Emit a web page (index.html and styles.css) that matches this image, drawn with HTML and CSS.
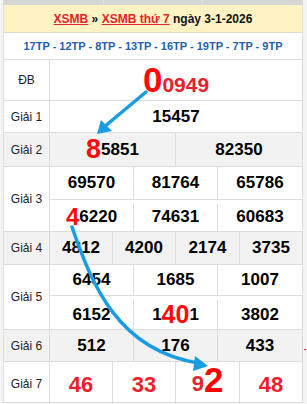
FILE: index.html
```html
<!DOCTYPE html>
<html lang="vi">
<head>
<meta charset="utf-8">
<link rel="stylesheet" href="styles.css">
</head>
<body>
<div class="page">
  <div class="topstrip"><div></div><div></div><div></div></div>
  <div class="board">
    <div class="title"><a href="#">XSMB</a> » <a href="#">XSMB thứ 7</a> ngày 3-1-2026</div>
    <div class="codes">17TP - 12TP - 8TP - 13TP - 16TP - 19TP - 7TP - 9TP</div>

    <div class="row r-db">
      <div class="label">ĐB</div>
      <div class="cells c1"><div class="cell db"><span class="big">0</span>0949</div></div>
    </div>
    <div class="row r-1">
      <div class="label">Giải 1</div>
      <div class="cells c1"><div class="cell">15457</div></div>
    </div>
    <div class="row r-2 alt">
      <div class="label">Giải 2</div>
      <div class="cells c2"><div class="cell"><span class="red r8">8</span>5851</div><div class="cell">82350</div></div>
    </div>
    <div class="row r-3">
      <div class="label">Giải 3</div>
      <div class="cells c3">
        <div class="cell top">69570</div><div class="cell top">81764</div><div class="cell top">65786</div>
        <div class="cell"><span class="red r4">4</span>6220</div><div class="cell">74631</div><div class="cell">60683</div>
      </div>
    </div>
    <div class="row r-4 alt">
      <div class="label">Giải 4</div>
      <div class="cells c4"><div class="cell">4812</div><div class="cell">4200</div><div class="cell">2174</div><div class="cell">3735</div></div>
    </div>
    <div class="row r-5">
      <div class="label">Giải 5</div>
      <div class="cells c3">
        <div class="cell top">6454</div><div class="cell top">1685</div><div class="cell top">1007</div>
        <div class="cell">6152</div><div class="cell">1<span class="red r40">40</span>1</div><div class="cell">3802</div>
      </div>
    </div>
    <div class="row r-6 alt">
      <div class="label">Giải 6</div>
      <div class="cells c3"><div class="cell">512</div><div class="cell">176</div><div class="cell">433</div></div>
    </div>
    <div class="row r-7">
      <div class="label">Giải 7</div>
      <div class="cells c4 g7"><div class="cell">46</div><div class="cell">33</div><div class="cell">9<span class="big">2</span></div><div class="cell">48</div></div>
    </div>
  </div>

  <svg class="arrows" width="307" height="404" viewBox="0 0 307 404">
    <g stroke="#199ce2" stroke-width="3.5" fill="none" stroke-linecap="round">
      <path d="M146 92 L104 127"/>
      <path d="M72 227 C 92 285, 118 350, 198 363"/>
    </g>
    <g fill="#199ce2">
      <polygon points="97,134 101,120 112,131"/>
      <polygon points="208,366 195,356 193,371"/>
    </g>
  </svg>
  <span class="dot"></span>
</div>
</body>
</html>
```

FILE: styles.css
```css
* { box-sizing: border-box; }
html, body { margin: 0; padding: 0; }
body {
  background: #f4f4f4;
  font-family: "Liberation Sans", Arial, sans-serif;
  width: 307px;
  height: 404px;
  overflow: hidden;
}
.page { position: relative; width: 307px; height: 404px; }

.topstrip {
  display: grid;
  grid-template-columns: 101px 99px 1fr;
  height: 5px;
  margin: 0 4px 0 3px;
  background: #d6d6d6;
}
.topstrip div { border-right: 1px solid #e4e4e4; }
.topstrip div:last-child { border-right: none; }

.board {
  margin: 0 4px 0 3px;
  border-left: 1px solid #dcdcdc;
  border-right: 1px solid #dcdcdc;
  background: #fff;
}

.title {
  height: 28px;
  display: flex;
  align-items: center;
  justify-content: center;
  background: #fff3c4;
  border-bottom: 1px solid #e2dcc4;
  font-size: 12px;
  font-weight: bold;
  color: #111;
  gap: 0;
  white-space: pre;
}
.title a { color: #e3242b; text-decoration: underline; }

.codes {
  height: 27px;
  display: flex;
  align-items: center;
  justify-content: center;
  border-bottom: 1px solid #dcdcdc;
  font-size: 11px;
  font-weight: bold;
  color: #2360b0;
  white-space: pre;
}

.row {
  display: grid;
  grid-template-columns: 46px 1fr;
  border-bottom: 1px solid #dcdcdc;
  background: #fff;
}
.row.alt { background: #f2f2f2; }
.label {
  border-right: 1px solid #dcdcdc;
  display: flex;
  align-items: center;
  justify-content: center;
  font-size: 12px;
  color: #222;
}
.cells { display: grid; }
.c1 { grid-template-columns: 1fr; }
.c2 { grid-template-columns: 1fr 1fr; }
.c3 { grid-template-columns: 84px 84px 1fr; }
.c4 { grid-template-columns: 63px 63px 64px 1fr; }
.cell {
  display: flex;
  align-items: center;
  justify-content: center;
  font-size: 17px;
  font-weight: bold;
  color: #000;
  border-right: 1px solid #dcdcdc;
  white-space: pre;
}
.cells .cell:nth-child(3n) { }
.c1 .cell:last-child,
.c2 .cell:nth-child(2n),
.c3 .cell:nth-child(3n),
.c4 .cell:nth-child(4n) { border-right: none; }
.cell.top { border-bottom: 1px solid #dcdcdc; }

.r-db { height: 41px; }
.r-1 { height: 32px; }
.r-2 { height: 34px; }
.r-3 { height: 65px; }
.r-3 .cell.top { height: 33px; }
.r-4 { height: 33px; }
.r-5 { height: 65px; }
.r-5 .cell.top { height: 31px; }
.r-6 { height: 32px; }
.r-7 { height: 41px; }

.db { color: #e8202e; font-size: 21px; align-items: baseline; padding-top: 2px; }
.db .big { color: #ff0a0a; font-size: 35px; line-height: 36px; }
.red { color: #ff0a0a; line-height: 1; }
.r8 { font-size: 27px; }
.r4 { font-size: 24px; }
.r40 { font-size: 25px; }

.g7 .cell { color: #ef1d2b; font-size: 22px; padding-top: 2px; }
.g7 .big { color: #ff0000; font-size: 35px; line-height: 1; }
.g7 .cell:nth-child(3) { align-items: flex-end; padding-bottom: 8px; padding-top: 0; }

.arrows { position: absolute; left: 0; top: 0; pointer-events: none; }
.dot { position: absolute; left: 304px; top: 349px; width: 2px; height: 1px; background: #f22; }
```
